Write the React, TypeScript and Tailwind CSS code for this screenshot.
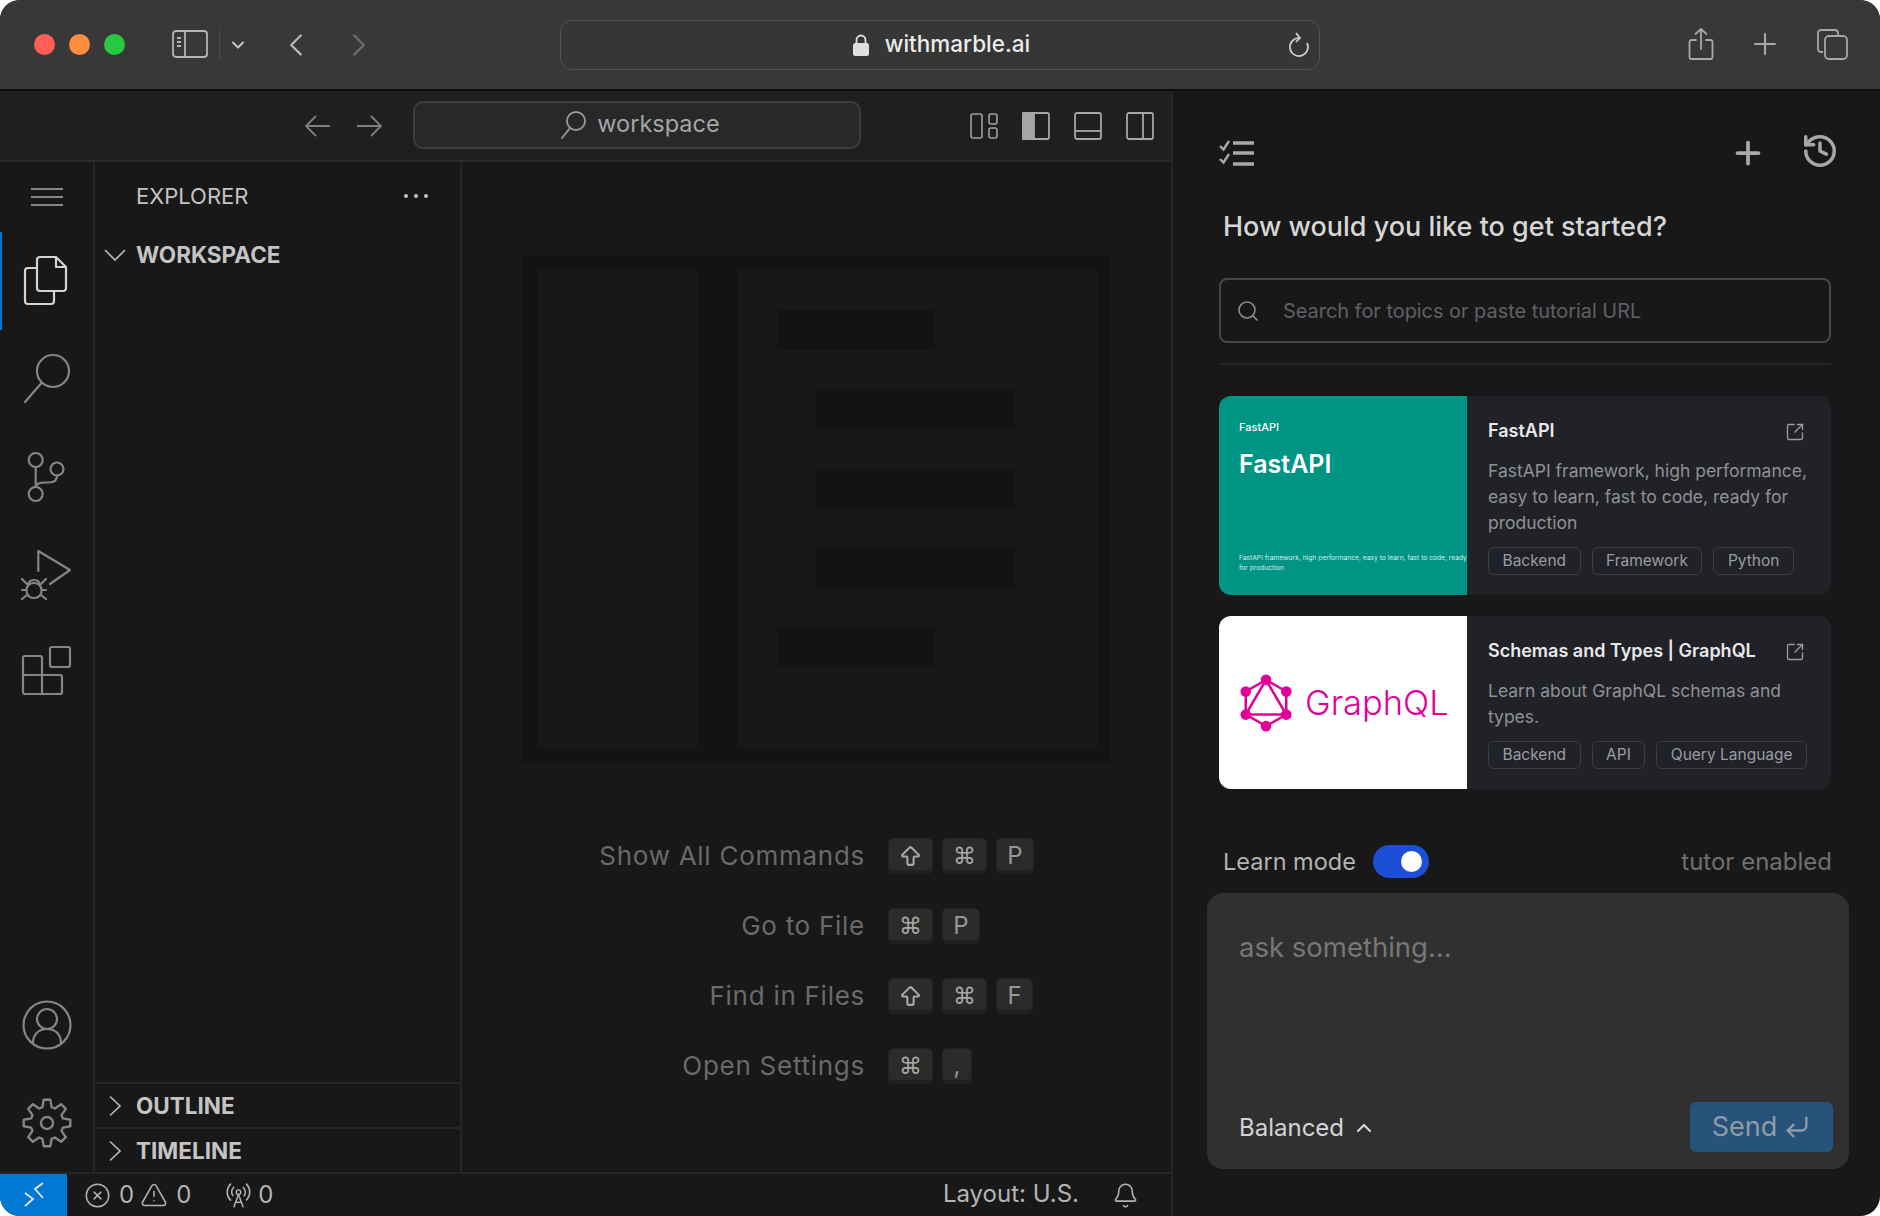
import React from 'react';
import { Plus, History, Search, ChevronUp, ChevronDown, ChevronLeft, ChevronRight, SquareArrowOutUpRight, CircleX, TriangleAlert, RadioTower, Bell, ArrowBigUp, CornerDownLeft } from 'lucide-react';

const Ic: React.FC<{ children: React.ReactNode; color?: string; w?: number }> = ({ children, color = '#858585', w = 2.2 }) => (
  <svg width="52" height="52" viewBox="0 0 52 52" fill="none" stroke={color} strokeWidth={w} strokeLinecap="round" strokeLinejoin="round">
    {children}
  </svg>
);

const gearPath = () => {
  const pts: string[] = [];
  const teeth = 8;
  for (let i = 0; i < teeth; i++) {
    const a = (i / teeth) * Math.PI * 2 - Math.PI / 2;
    const step = (Math.PI * 2) / teeth;
    const seq: [number, number][] = [
      [16.5, a - step * 0.36],
      [23.5, a - step * 0.18],
      [23.5, a + step * 0.18],
      [16.5, a + step * 0.36],
    ];
    seq.forEach(([r, t]) => pts.push(`${(26 + r * Math.cos(t)).toFixed(1)} ${(26 + r * Math.sin(t)).toFixed(1)}`));
  }
  return 'M' + pts.join('L') + 'Z';
};

const ActivityBar = () => (
  <div className="w-[95px] shrink-0 flex flex-col border-r-2 border-[#262626]">
    <div className="h-[70px] flex flex-col items-center justify-center gap-[6px]">
      <div className="w-[32px] h-[2px] bg-[#858585]" />
      <div className="w-[32px] h-[2px] bg-[#858585]" />
      <div className="w-[32px] h-[2px] bg-[#858585]" />
    </div>
    <div className="h-[98px] flex items-center justify-center border-l-[2px] border-[#0078d4] pr-[2px]">
      <Ic color="#d4d4d4">
        <path d="M19 2h16l10 10v21a3 3 0 0 1-3 3H19a3 3 0 0 1-3-3V5a3 3 0 0 1 3-3z" />
        <path d="M35 3v9h9" />
        <path d="M16 13H7a3 3 0 0 0-3 3v30a3 3 0 0 0 3 3h23a3 3 0 0 0 3-3V36" />
      </Ic>
    </div>
    <div className="h-[98px] flex items-center justify-center">
      <Ic>
        <circle cx="32" cy="18" r="16" />
        <path d="M20.5 30 4 49" />
      </Ic>
    </div>
    <div className="h-[97px] flex items-center justify-center">
      <Ic>
        <circle cx="14.7" cy="9" r="7" />
        <circle cx="36" cy="18" r="6.5" />
        <circle cx="14.7" cy="43" r="7" />
        <path d="M14.7 16v20" />
        <path d="M36 24.5c0 5-3 7-8 7h-4c-5 0-9 1.5-9.3 4.5" />
      </Ic>
    </div>
    <div className="h-[97px] flex items-center justify-center">
      <Ic>
        <path d="M17.3 23V3L49 22 29 36" />
        <path d="M7 38c0-4 2.500-6 6-6s6 2 6 6" />
        <rect x="5.500" y="35" width="15" height="15" rx="7" />
        <path d="M1 31l5 5M25 31l-5 5M1 42h4M25 42h-4M1 51l5-4M25 51l-5-4" />
      </Ic>
    </div>
    <div className="h-[98px] flex items-center justify-center">
      <Ic>
        <rect x="29" y="2" width="20" height="20" rx="2" />
        <path d="M4 11h15a2 2 0 0 1 2 2v17h18a2 2 0 0 1 2 2v15a2 2 0 0 1-2 2H4a2 2 0 0 1-2-2V13a2 2 0 0 1 2-2z" />
        <path d="M2 30h19v19" />
      </Ic>
    </div>
    <div className="flex-1" />
    <div className="h-[98px] flex items-center justify-center">
      <Ic>
        <circle cx="26" cy="26" r="23.500" />
        <circle cx="26" cy="20" r="10" />
        <path d="M12 44c0-8 5-14 14-14s14 6 14 14" />
      </Ic>
    </div>
    <div className="h-[98px] flex items-center justify-center">
      <Ic w={2.4}>
        <path d={gearPath()} />
        <circle cx="26" cy="26" r="6" />
      </Ic>
    </div>
  </div>
);

const TreeChevron: React.FC<{ open?: boolean }> = ({ open }) => (
  <svg width="22" height="22" viewBox="0 0 22 22" fill="none" stroke="#b5b5b5" strokeWidth="1.700">
    {open ? <path d="M1 6l10 10L21 6" /> : <path d="M6 1.500 16 11 6 20.500" />}
  </svg>
);

const Sidebar = () => (
  <div className="w-[367px] shrink-0 flex flex-col border-r-2 border-[#262626]">
    <div className="h-[68px] pl-[41px] pr-[32px] flex items-center justify-between">
      <span className="text-[22px] text-[#c4c4c4]">EXPLORER</span>
      <div className="flex gap-[6px]">
        <div className="w-[4px] h-[4px] rounded-full bg-[#c4c4c4]" />
        <div className="w-[4px] h-[4px] rounded-full bg-[#c4c4c4]" />
        <div className="w-[4px] h-[4px] rounded-full bg-[#c4c4c4]" />
      </div>
    </div>
    <div className="flex items-center h-[44px] pl-[9px] mt-[3px]">
      <TreeChevron open />
      <span className="ml-[10px] text-[22.500px] font-bold text-[#c4c4c4]">WORKSPACE</span>
    </div>
    <div className="flex-1" />
    <div className="h-[45px] border-t-2 border-[#262626] flex items-center pl-[9px]">
      <TreeChevron />
      <span className="ml-[10px] text-[22.500px] font-bold text-[#c4c4c4]">OUTLINE</span>
    </div>
    <div className="h-[45px] border-t-2 border-[#262626] flex items-center pl-[9px]">
      <TreeChevron />
      <span className="ml-[10px] text-[22.500px] font-bold text-[#c4c4c4]">TIMELINE</span>
    </div>
  </div>
);

const Key: React.FC<{ children: React.ReactNode; w: number }> = ({ children, w }) => (
  <div style={{ width: w }} className="h-[36px] rounded-[5px] bg-[#2b2b2b] shadow-[inset_0_-3px_0_#1f1f1f] border border-[#222222] flex items-center justify-center text-[24px] leading-none text-[#979797]">
    {children}
  </div>
);

const Shift = () => <ArrowBigUp size={25} strokeWidth={2} className="text-[#a8a8a8]" />;
const Cmd = () => <span className="font-['DejaVu_Sans',sans-serif] text-[23px] text-[#a8a8a8]">⌘</span>;

const shortcuts: { label: string; keys: [React.ReactNode, number][] }[] = [
  { label: 'Show All Commands', keys: [[<Shift />, 45], [<Cmd />, 45], ['P', 38]] },
  { label: 'Go to File', keys: [[<Cmd />, 45], ['P', 38]] },
  { label: 'Find in Files', keys: [[<Shift />, 45], [<Cmd />, 45], ['F', 37]] },
  { label: 'Open Settings', keys: [[<Cmd />, 45], [',', 30]] },
];

const Editor = () => (
  <div className="flex-1 flex flex-col pt-[93px]">
    <div className="mx-auto w-[588px] h-[508px] bg-[#131313] p-[14px] flex gap-[40px]">
      <div className="w-[161px] bg-[#181818]" />
      <div className="w-[361px] bg-[#181818] pt-[41px] flex flex-col gap-[39.25px]">
        <div className="ml-[40px] w-[158px] h-[40px] bg-[#131313]" />
        <div className="ml-[79px] w-[199px] h-[40px] bg-[#131313]" />
        <div className="ml-[79px] w-[199px] h-[40px] bg-[#131313]" />
        <div className="ml-[79px] w-[199px] h-[40px] bg-[#131313]" />
        <div className="ml-[40px] w-[158px] h-[40px] bg-[#131313]" />
      </div>
    </div>
    <div className="mt-[75px] flex flex-col gap-[34px]">
      {shortcuts.map((s) => (
        <div key={s.label} className="flex items-center gap-[23px]">
          <div className="w-[403px] text-right text-[26px] leading-[36px] tracking-[0.028em] text-[#6a6a6a]">{s.label}</div>
          <div className="flex gap-[9px]">
            {s.keys.map(([k, w], i) => (
              <Key key={i} w={w}>{k}</Key>
            ))}
          </div>
        </div>
      ))}
    </div>
  </div>
);

const StatusBar = () => (
  <div className="h-[44px] border-t-2 border-[#262626] flex items-center text-[24px] text-[#b4b4b4]">
    <div className="w-[67px] h-full bg-[#0078d4] flex items-center justify-center">
      <svg width="24" height="28" viewBox="0 0 24 28" fill="none" stroke="#e8e8e8" strokeWidth="1.800">
        <path d="M21 2l-8 6 8 9M3 12l8 6-8 7" />
      </svg>
    </div>
    <CircleX size={27} strokeWidth={1.3} className="ml-[17px]" />
    <span className="ml-[8px]">0</span>
    <TriangleAlert size={28} strokeWidth={1.3} className="ml-[6px]" />
    <span className="ml-[8px]">0</span>
    <RadioTower size={27} strokeWidth={1.3} className="ml-[34px]" />
    <span className="ml-[6px]">0</span>
    <span className="ml-auto -translate-y-px">Layout: U.S.</span>
    <Bell size={27} strokeWidth={1.4} className="ml-[33px] mr-[32px]" />
  </div>
);

const Toolbar = () => (
  <div className="h-[71px] bg-[#1e2020] border-b-2 border-[#2a2c2c] flex items-center pl-[304px] pr-[17px]">
    <svg width="26" height="22" viewBox="0 0 26 22" fill="none" stroke="#7d7f80" strokeWidth="1.800">
      <path d="M26 11H2M12 1 2 11l10 10" />
    </svg>
    <svg width="26" height="22" viewBox="0 0 26 22" fill="none" stroke="#7d7f80" strokeWidth="1.800" className="ml-[27px]">
      <path d="M0 11h24M14 1l10 10-10 10" />
    </svg>
    <div className="ml-[30px] mb-[2px] w-[448px] h-[48px] rounded-[10px] bg-[#282828] border-2 border-[#3d3d3d] flex items-center justify-center gap-[11px] pl-[6px]">
      <svg width="26" height="28" viewBox="0 0 26 28" fill="none" stroke="#9a9a9a" strokeWidth="1.800" strokeLinecap="round">
        <circle cx="16" cy="10" r="9" />
        <path d="M10 17 2 27" />
      </svg>
      <span className="text-[23.500px] leading-[28px] -translate-y-px text-[#a6a6a6]">workspace</span>
    </div>
    <div className="ml-auto flex items-center gap-[24px]">
      <svg width="28" height="26" viewBox="0 0 28 26" fill="none" stroke="#a0a0a0" strokeWidth="1.600">
        <rect x="1" y="1" width="11" height="24" rx="2" />
        <rect x="19" y="1" width="8" height="10" rx="2" />
        <rect x="19" y="15" width="8" height="10" rx="2" />
      </svg>
      <svg width="28" height="28" viewBox="0 0 28 28" fill="none" stroke="#a6a6a6" strokeWidth="1.800">
        <rect x="1" y="1" width="26" height="26" rx="2" />
        <rect x="1" y="1" width="11" height="26" fill="#a6a6a6" />
      </svg>
      <svg width="28" height="28" viewBox="0 0 28 28" fill="none" stroke="#a6a6a6" strokeWidth="1.800">
        <rect x="1" y="1" width="26" height="26" rx="2" />
        <path d="M1 19h26" />
      </svg>
      <svg width="28" height="28" viewBox="0 0 28 28" fill="none" stroke="#a6a6a6" strokeWidth="1.800">
        <rect x="1" y="1" width="26" height="26" rx="2" />
        <path d="M17 1v26" />
      </svg>
    </div>
  </div>
);

const TitleBar = () => (
  <div className="h-[91px] shrink-0 bg-[#383838] border-b-2 border-[#0e0e0e] flex items-center pl-[34px] pr-[32px]">
    <div className="flex gap-[14px]">
      <div className="w-[21px] h-[21px] rounded-full bg-[#ff5f57]" />
      <div className="w-[21px] h-[21px] rounded-full bg-[#fe8c3f]" />
      <div className="w-[21px] h-[21px] rounded-full bg-[#28c840]" />
    </div>
    <svg width="36" height="28" viewBox="0 0 36 28" fill="none" stroke="#b4b4b4" strokeWidth="1.800" className="ml-[47px] -mt-[2px]">
      <rect x="1" y="1" width="34" height="26" rx="3" />
      <path d="M13 1v26" />
      <path d="M5 8h4M5 12h4M5 16h4" />
    </svg>
    <div className="ml-[11px] w-px h-[30px] bg-[#4c4c4c]" />
    <ChevronDown size={20} strokeWidth={2.500} className="ml-[8px] text-[#c4c4c4]" />
    <ChevronLeft size={38} strokeWidth={1.500} className="ml-[29px] text-[#b8b8b8]" />
    <ChevronRight size={38} strokeWidth={1.500} className="ml-[25px] text-[#6e6e6e]" />
    <div className="ml-[182px] w-[760px] h-[50px] rounded-[12px] bg-[#363636] border border-[#505050] relative flex items-center justify-center gap-[16px] pl-[3px]">
      <svg width="16" height="22" viewBox="0 0 16 22" fill="#e0e0e0">
        <rect x="0" y="9" width="16" height="13" rx="2.500" />
        <path d="M3.500 10V6a4.500 4.500 0 0 1 9 0v4" fill="none" stroke="#e0e0e0" strokeWidth="1.800" />
      </svg>
      <span className="text-[22.500px] font-medium leading-none text-[#ececec]">withmarble.ai</span>
      <svg width="22" height="28" viewBox="0 0 22 28" fill="none" stroke="#d0d0d0" strokeWidth="1.700" className="absolute right-[9px]">
        <path d="M11 7a9 9 0 1 0 8 5" />
        <path d="M8 2l4 5-4 4" />
      </svg>
    </div>
    <div className="ml-auto flex items-center gap-[34px] -mt-[2px]">
      <svg width="26" height="34" viewBox="0 0 26 34" fill="none" stroke="#a8a8a8" strokeWidth="1.800" strokeLinecap="round" strokeLinejoin="round">
        <path d="M8 13H3.500a2 2 0 0 0-2 2v15a2 2 0 0 0 2 2h19a2 2 0 0 0 2-2V15a2 2 0 0 0-2-2H18" />
        <path d="M13 22V2M7.500 7 13 2l5.500 5" />
      </svg>
      <Plus size={34} strokeWidth={1.500} className="text-[#a8a8a8]" />
      <svg width="32" height="32" viewBox="0 0 32 32" fill="none" stroke="#a8a8a8" strokeWidth="1.800">
        <path d="M7 24H5a3 3 0 0 1-3-3V5a3 3 0 0 1 3-3h14a3 3 0 0 1 3 3v2" />
        <rect x="9" y="8" width="22" height="23" rx="4" />
      </svg>
    </div>
  </div>
);

const Tag: React.FC<{ children: React.ReactNode }> = ({ children }) => (
  <span className="h-[28px] px-[13.500px] rounded-[6px] border border-[#3b3c41] flex items-center text-[15.500px] whitespace-nowrap text-[#9a9ca1]">{children}</span>
);

const Card: React.FC<{ image: React.ReactNode; title: string; desc: string; tags: string[]; h: string }> = ({ image, title, desc, tags, h }) => (
  <div className={`flex rounded-[12px] overflow-hidden bg-[#212227] ${h}`}>
    {image}
    <div className="flex-1 pl-[21px] pr-[22px] pt-[21px] flex flex-col">
      <div className="flex items-center justify-between h-[26px]">
        <span className="text-[18px] font-semibold text-[#e8e8ea]">{title}</span>
        <SquareArrowOutUpRight size={20} strokeWidth={1.600} className="text-[#9a9ca1] mr-[4px] mt-[4px]" />
      </div>
      <p className="mt-[15px] mb-[11px] text-[17.500px] leading-[26px] text-[#8f9196]">{desc}</p>
      <div className="flex gap-[11px]">
        {tags.map((t) => (
          <Tag key={t}>{t}</Tag>
        ))}
      </div>
    </div>
  </div>
);

const FastApiImage = () => (
  <div className="w-[248px] shrink-0 bg-[#009485] pl-[20px] pr-[4px] pt-[24px] pb-[22px] flex flex-col text-white overflow-hidden">
    <div className="text-[11px] leading-[14px] font-medium">FastAPI</div>
    <div className="mt-[14px] text-[25px] leading-[32px] font-semibold">FastAPI</div>
    <div className="mt-auto text-[6.700px] leading-[10px] h-[20px] text-[#d8f0ec] whitespace-nowrap">
      FastAPI framework, high performance, easy to learn, fast to code, ready<br />for production
    </div>
  </div>
);

const GraphQLImage = () => (
  <div className="w-[248px] shrink-0 bg-white flex items-center pl-[20px] overflow-hidden">
    <svg width="54" height="60" viewBox="0 0 56 60" fill="none" stroke="#e10098" strokeWidth="2.600">
      <path d="M28 6 49 18v24L28 54 7 42V18z" />
      <path d="M28 6 7 42h42z" />
      <g fill="#e10098" stroke="none">
        <circle cx="28" cy="6" r="5.500" />
        <circle cx="49" cy="18" r="5.500" />
        <circle cx="49" cy="42" r="5.500" />
        <circle cx="28" cy="54" r="5.500" />
        <circle cx="7" cy="42" r="5.500" />
        <circle cx="7" cy="18" r="5.500" />
      </g>
    </svg>
    <span className="ml-[12px] text-[34.500px] font-light text-[#e10098]">GraphQL</span>
  </div>
);

const RightPanel = () => (
  <div className="flex-1 min-w-0 pl-[46px] pr-[49px] flex flex-col">
    <div className="mt-[43px] h-[38px] flex items-center justify-between">
      <svg width="36" height="28" viewBox="0 0 36 28" fill="none" stroke="#a8a8a8" strokeWidth="2.400">
        <path d="M1 7l3.500 3.500L10 2M1 20l3.500 3.500L10 15" />
        <path d="M14 4h21M14 14h21M14 25h21" strokeWidth="3.500" />
      </svg>
      <div className="flex items-center gap-[35px] -mr-[8px]">
        <Plus size={36} strokeWidth={2.500} className="text-[#a8a8a8]" />
        <History size={38} strokeWidth={2.200} className="text-[#a8a8a8] -mt-[4px]" />
      </div>
    </div>
    <div className="mt-[37px] pl-[4px] h-[36px] text-[27px] leading-[36px] font-medium text-[#d6d6d6]">How would you like to get started?</div>
    <div className="mt-[33px] h-[65px] rounded-[8px] border-2 border-[#46474b] flex items-center pl-[15px]">
      <Search size={24} strokeWidth={1.600} className="text-[#8a8c90]" />
      <span className="ml-[23px] text-[19.900px] translate-y-px text-[#5f6166]">Search for topics or paste tutorial URL</span>
    </div>
    <div className="mt-[20px] h-[2px] bg-[#252525]" />
    <div className="mt-[31px] flex flex-col gap-[21px]">
      <Card
        image={<FastApiImage />}
        title="FastAPI"
        desc="FastAPI framework, high performance, easy to learn, fast to code, ready for production"
        tags={['Backend', 'Framework', 'Python']}
        h="h-[199px]"
      />
      <Card
        image={<GraphQLImage />}
        title="Schemas and Types | GraphQL"
        desc="Learn about GraphQL schemas and types."
        tags={['Backend', 'API', 'Query Language']}
        h="h-[173px]"
      />
    </div>
    <div className="mt-[56px] h-[33px] flex items-center pl-[4px] -mr-px">
      <span className="text-[23.500px] text-[#b4b4b4]">Learn mode</span>
      <div className="ml-[17px] w-[56px] h-[33px] rounded-full bg-[#1d4ed8] flex items-center justify-end pr-[7px]">
        <div className="w-[21px] h-[21px] rounded-full bg-white" />
      </div>
      <span className="ml-auto text-[24px] text-[#707070]">tutor enabled</span>
    </div>
    <div className="mt-[15px] -ml-[12px] -mr-[18px] h-[276px] rounded-[16px] bg-[#303030] pl-[32px] pr-[16px] pt-[36px] pb-[17px] flex flex-col justify-between">
      <div className="text-[27.500px] leading-[36px] text-[#777777]">ask something...</div>
      <div className="flex items-center justify-between">
        <div className="flex items-center text-[24px] text-[#d4d4d4] translate-y-px">
          Balanced
          <ChevronUp size={24} strokeWidth={2.200} className="ml-[8px]" />
        </div>
        <div className="w-[143px] h-[50px] rounded-[6px] bg-[#275279] flex items-center justify-center gap-[6px] text-[27px] text-[#8f9ba6]">
          Send
          <CornerDownLeft size={28} strokeWidth={2} />
        </div>
      </div>
    </div>
  </div>
);

const App: React.FC = () => (
  <div className="w-[1880px] h-[1216px] bg-white">
    <div className="w-full h-full rounded-[20px] overflow-hidden bg-[#181818] flex flex-col font-['Inter',sans-serif]">
      <TitleBar />
      <div className="flex-1 min-h-0 flex">
        <div className="w-[1173px] shrink-0 flex flex-col border-r-2 border-[#262626]">
          <Toolbar />
          <div className="flex-1 min-h-0 flex">
            <ActivityBar />
            <Sidebar />
            <Editor />
          </div>
          <StatusBar />
        </div>
        <RightPanel />
      </div>
    </div>
  </div>
);

export default App;
